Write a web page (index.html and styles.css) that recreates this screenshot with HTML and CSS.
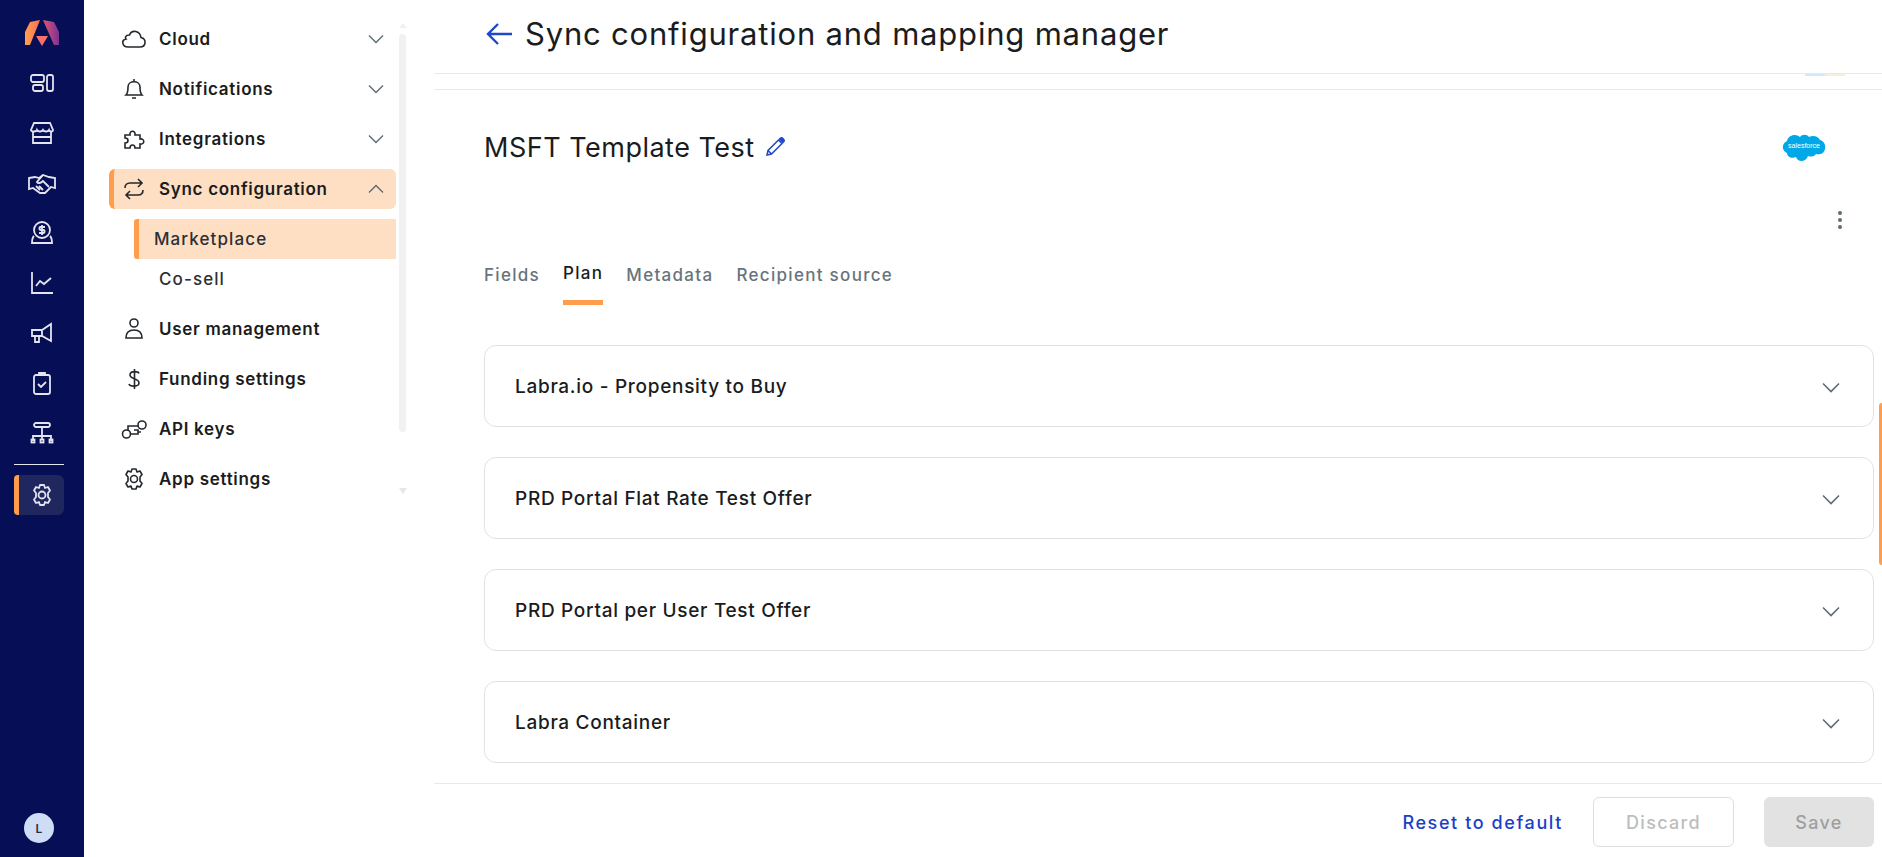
FILE: index.html
```html
<!DOCTYPE html>
<html lang="en">

<head>
    <meta charset="UTF-8">
    <meta name="viewport" content="width=device-width, initial-scale=1.0">
    <title>Sync configuration and mapping manager</title>
    <link rel="stylesheet" href="styles.css">
</head>

<body>
    <div class="page">
        <nav class="rail">
            <div class="rail-item">
                <svg class="logo" viewBox="0 0 34 28">
                    <defs>
                        <linearGradient id="lg1" x1="0" y1="0" x2="1" y2="0">
                            <stop offset="0" stop-color="#ffa04d" />
                            <stop offset="1" stop-color="#f8705a" />
                        </linearGradient>
                        <linearGradient id="lg2" x1="0" y1="0" x2="1" y2="0">
                            <stop offset="0" stop-color="#e2566e" />
                            <stop offset="1" stop-color="#7a3296" />
                        </linearGradient>
                    </defs>
                    <path d="M0 13 5 3 15 1 5 26H0Z" fill="url(#lg1)" />
                    <path d="M18 1 29 3 34 13V26H29Z" fill="url(#lg2)" />
                    <path d="M11 17H23L17 27Z" fill="#f8706a" />
                </svg>
            </div>
            <div class="rail-item">
                <svg class="rail-icon" viewBox="0 0 24 24">
                    <rect x="1" y="4" width="13" height="7" rx="2" />
                    <rect x="3" y="14" width="10" height="6" rx="2" />
                    <rect x="17" y="4" width="6" height="16" rx="2" />
                </svg>
            </div>
            <div class="rail-item">
                <svg class="rail-icon" viewBox="0 0 24 24">
                    <path d="M4 2H20L23 9C23 11 19.500 11 19 9 18 11 14 11 13 9 12 11 8 11 7 9 6.500 11 1 11 1 9Z" />
                    <path d="M3 11V22H21V11M3 16H21" />
                </svg>
            </div>
            <div class="rail-item">
                <svg class="rail-icon rail-icon-wide" viewBox="0 0 28 24">
                    <path d="M1 7 7 6 11 7 15 4 21 6 27 7V17L23 16 17 22 12 22 5 17 1 18Z" />
                    <path d="M15 4 9 11C10 13 13 12 15 10L21 16M11 15 15 19M8 15 12 19" />
                </svg>
            </div>
            <div class="rail-item">
                <svg class="rail-icon" viewBox="0 0 24 24">
                    <circle cx="12" cy="9" r="8" />
                    <path d="M15 6H10.500C9 6 9 9 10.500 9H13.500C15 9 15 12 13.500 12H9M12 4V14" />
                    <path d="M4 15C2 17 2 20 2 22H22C22 20 22 17 20 15" />
                </svg>
            </div>
            <div class="rail-item">
                <svg class="rail-icon" viewBox="0 0 24 24">
                    <path d="M2 1V22H23M6 15 10 10 14 13 21 7" />
                </svg>
            </div>
            <div class="rail-item">
                <svg class="rail-icon" viewBox="0 0 24 24">
                    <path d="M2 9H12L21 3V20L12 15H2ZM5 15V21H9V15M12 9V15" />
                </svg>
            </div>
            <div class="rail-item">
                <svg class="rail-icon" viewBox="0 0 24 24">
                    <rect x="4" y="4" width="16" height="19" rx="2" />
                    <path d="M9 4V2H15V4M8 13 11 16 16 11" />
                </svg>
            </div>
            <div class="rail-item">
                <svg class="rail-icon" viewBox="0 0 24 24">
                    <rect x="4" y="2" width="16" height="4" rx="2" />
                    <path d="M12 6V19M3 20V15H21V20" />
                    <rect x="1.500" y="18.500" width="3" height="3" />
                    <rect x="10.500" y="18.500" width="3" height="3" />
                    <rect x="19.500" y="18.500" width="3" height="3" />
                </svg>
            </div>
            <div class="rail-divider"></div>
            <div class="rail-active">
                <svg class="rail-icon" viewBox="0 0 24 24">
                    <circle cx="12" cy="12" r="3.500" />
                    <path d="M10 2H14L15 5 18 4 20 7.500 18 10V14L20 16.500 18 20 15 19 14 22H10L9 19 6 20 4 16.500 6 14V10L4 7.500 6 4 9 5Z" stroke-linejoin="round" />
                </svg>
            </div>
            <div class="avatar">L</div>
        </nav>

        <aside class="sidebar">
            <div class="menu-row">
                <svg class="menu-icon" viewBox="0 0 24 24">
                    <path d="M6 20H18C24 20 25 12 19 10.500 18 4 10 2 7.500 8 3 8 3 11 4 12 -1 13 0 20 6 20Z" />
                </svg>
                <span>Cloud</span>
                <svg class="chevron" viewBox="0 0 16 10"><path d="M1 1.500 8 8.500 15 1.500" /></svg>
            </div>
            <div class="menu-row">
                <svg class="menu-icon" viewBox="0 0 24 24">
                    <path d="M4 18C6 16 6 14 6 10 6 3 18 3 18 10 18 14 18 16 20 18ZM10 21H14M12 2V4" />
                </svg>
                <span>Notifications</span>
                <svg class="chevron" viewBox="0 0 16 10"><path d="M1 1.500 8 8.500 15 1.500" /></svg>
            </div>
            <div class="menu-row">
                <svg class="menu-icon" viewBox="0 0 24 24">
                    <path d="M3 8H8C7 3 14 3 13 8H18V12C23 11 23 18 18 17V21H13C13 17 8 17 8 21H3V16C7 16 7 11 3 11Z" />
                </svg>
                <span>Integrations</span>
                <svg class="chevron" viewBox="0 0 16 10"><path d="M1 1.500 8 8.500 15 1.500" /></svg>
            </div>
            <div class="menu-row menu-row-open">
                <svg class="menu-icon" viewBox="0 0 24 24">
                    <path d="M16 2 20 6 16 10M20 6H8C5 6 3 8 3 11M8 22 4 18 8 14M4 18H16C19 18 21 16 21 13" />
                </svg>
                <span>Sync configuration</span>
                <svg class="chevron" viewBox="0 0 16 10"><path d="M1 8.500 8 1.500 15 8.500" /></svg>
            </div>
            <div class="sub-row sub-row-active">Marketplace</div>
            <div class="sub-row sub-row-last">Co-sell</div>
            <div class="menu-row">
                <svg class="menu-icon" viewBox="0 0 24 24">
                    <circle cx="12" cy="6" r="4" />
                    <path d="M4 21C4 15 8 13 12 13 16 13 20 15 20 21Z" />
                </svg>
                <span>User management</span>
            </div>
            <div class="menu-row">
                <svg class="menu-icon" viewBox="0 0 24 24">
                    <path d="M17 6.500C16 4 8 3.500 8 8 8 12.500 17 11 17 16 17 20 8 20 7 17M12.500 2V22" />
                </svg>
                <span>Funding settings</span>
            </div>
            <div class="menu-row">
                <svg class="menu-icon" viewBox="0 0 24 24">
                    <circle cx="4.500" cy="17" r="4" />
                    <circle cx="20" cy="8" r="4" />
                    <path d="M6 13V9H16M8.500 17H16V13H12M16 15H19" />
                </svg>
                <span>API keys</span>
            </div>
            <div class="menu-row">
                <svg class="menu-icon" viewBox="0 0 24 24">
                    <circle cx="12" cy="12" r="3.500" />
                    <path d="M10 2H14L15 5 18 4 20 7.500 18 10V14L20 16.500 18 20 15 19 14 22H10L9 19 6 20 4 16.500 6 14V10L4 7.500 6 4 9 5Z" stroke-linejoin="round" />
                </svg>
                <span>App settings</span>
            </div>
            <div class="scroll-up"></div>
            <div class="scroll-thumb"></div>
            <div class="scroll-down"></div>
        </aside>

        <main class="main">
            <header class="header">
                <svg class="back" viewBox="0 0 28 24">
                    <path d="M26 12H2M12 2 2 12 12 22" />
                </svg>
                <h1>Sync configuration and mapping manager</h1>
            </header>
            <div class="sub-header">
                <div class="peek peek-blue"></div>
                <div class="peek peek-yellow"></div>
            </div>

            <section class="content">
                <div class="title-row">
                    <h2>MSFT Template Test</h2>
                    <svg class="pencil" viewBox="0 0 20 20">
                        <path d="M13.500 3 17 6.500 6.500 17 2 18 3 13.500ZM3 13.500 6.500 17" />
                        <path d="M14.500 2 16 .8C17 .2 19.800 3 19.200 4L18 5.500Z" fill="currentColor" />
                    </svg>
                    <svg class="sf-logo" viewBox="0 0 44 32">
                        <path d="M18 6C20 3 25 3 27 6 31 4 36 5 38 9 42 10 44 14 43 18 42 23 37 24 34 23 32 26 28 26 26 25 24 31 16 32 14 26 10 28 5 26 5 22 0 20 -1 13 5 10 6 4 14 2 18 6Z" fill="#00a8e8" />
                        <text class="sf-text" x="22" y="17" text-anchor="middle">salesforce</text>
                    </svg>
                </div>
                <div class="more-row">
                    <div class="more">
                        <span class="dot"></span>
                        <span class="dot"></span>
                        <span class="dot"></span>
                    </div>
                </div>
                <div class="tabs">
                    <div class="tab">Fields</div>
                    <div class="tab tab-active">Plan</div>
                    <div class="tab">Metadata</div>
                    <div class="tab">Recipient source</div>
                </div>
                <div class="plans">
                    <div class="plan">
                        <span>Labra.io - Propensity to Buy</span>
                        <svg class="plan-chevron" viewBox="0 0 18 11"><path d="M1 1.500 9 9.500 17 1.500" /></svg>
                    </div>
                    <div class="plan">
                        <span>PRD Portal Flat Rate Test Offer</span>
                        <svg class="plan-chevron" viewBox="0 0 18 11"><path d="M1 1.500 9 9.500 17 1.500" /></svg>
                    </div>
                    <div class="plan">
                        <span>PRD Portal per User Test Offer</span>
                        <svg class="plan-chevron" viewBox="0 0 18 11"><path d="M1 1.500 9 9.500 17 1.500" /></svg>
                    </div>
                    <div class="plan">
                        <span>Labra Container</span>
                        <svg class="plan-chevron" viewBox="0 0 18 11"><path d="M1 1.500 9 9.500 17 1.500" /></svg>
                    </div>
                </div>
            </section>

            <footer class="footer">
                <a class="reset">Reset to default</a>
                <button class="btn btn-discard">Discard</button>
                <button class="btn btn-save">Save</button>
            </footer>
        </main>
        <div class="side-tab"></div>
    </div>
</body>

</html>
```

FILE: styles.css
```css
* {
    box-sizing: border-box;
}

body {
    margin: 0;
    font-family: Inter, "Noto Sans", sans-serif;
    color: #1a1c20;
    background: white;
}

svg {
    overflow: visible;
}

.page {
    display: flex;
    height: 857px;
    overflow: hidden;
    position: relative;
}

/* left rail */
.rail {
    width: 84px;
    flex-shrink: 0;
    background: #060f55;
    display: flex;
    flex-direction: column;
    padding-top: 8px;
}

.rail-item {
    height: 50px;
    display: flex;
    align-items: center;
    justify-content: center;
}

.logo {
    width: 34px;
    height: 28px;
}

.rail-icon {
    width: 24px;
    height: 24px;
    fill: none;
    stroke: #e3e4ee;
    stroke-width: 1.8;
}

.rail-icon-wide {
    width: 28px;
}

.rail-divider {
    height: 1px;
    background: #e3e4ee;
    margin: 6px 20px 10px 14px;
}

.rail-active {
    width: 50px;
    height: 40px;
    margin-left: 14px;
    background: #20275f;
    border-left: 5px solid #ff9d4d;
    border-radius: 4px 6px 6px 4px;
    display: flex;
    align-items: center;
    justify-content: center;
}

.avatar {
    width: 30px;
    height: 30px;
    margin: auto 0 14px 24px;
    border-radius: 50%;
    background: #cfdcf6;
    color: #2a2e45;
    font-size: 12px;
    font-weight: 600;
    display: flex;
    align-items: center;
    justify-content: center;
}

/* menu */
.sidebar {
    width: 350px;
    flex-shrink: 0;
    padding: 19px 0 0 25px;
    position: relative;
}

.menu-row {
    width: 287px;
    height: 40px;
    margin-bottom: 10px;
    padding-left: 13px;
    display: flex;
    align-items: center;
    font-size: 17px;
    font-weight: 600;
    letter-spacing: 0.700px;
}

.menu-icon {
    width: 24px;
    height: 24px;
    margin-right: 13px;
    flex-shrink: 0;
    fill: none;
    stroke: #24282d;
    stroke-width: 1.6;
}

.chevron {
    width: 16px;
    height: 10px;
    margin-left: auto;
    margin-right: 12px;
    fill: none;
    stroke: #5f6b72;
    stroke-width: 1.4;
}

.menu-row-open {
    background: #fedfc3;
    border-left: 5px solid #ff9d4d;
    border-radius: 6px;
    padding-left: 8px;
}

.sub-row {
    width: 262px;
    height: 40px;
    margin-left: 25px;
    padding-left: 25px;
    display: flex;
    align-items: center;
    font-size: 17px;
    font-weight: 500;
    letter-spacing: 1.100px;
    color: #2b3036;
}

.sub-row-active {
    background: #fedfc3;
    border-left: 5px solid #ff9d4d;
    border-radius: 3px 0 0 3px;
    padding-left: 15px;
}

.sub-row-last {
    margin-bottom: 10px;
}

.scroll-thumb {
    position: absolute;
    left: 315px;
    top: 34px;
    width: 7px;
    height: 398px;
    background: #f0f1f1;
    border-radius: 4px;
}

.scroll-up,
.scroll-down {
    position: absolute;
    left: 315px;
    border-left: 4px solid transparent;
    border-right: 4px solid transparent;
}

.scroll-up {
    top: 23px;
    border-bottom: 5px solid #f0f1f1;
}

.scroll-down {
    top: 488px;
    border-top: 6px solid #e6e7e7;
}

/* main column */
.main {
    flex: 1;
    display: flex;
    flex-direction: column;
    min-width: 0;
}

.header {
    height: 74px;
    border-bottom: 1px solid #e9e9e9;
    padding: 0 0 6px 52px;
    display: flex;
    align-items: center;
}

.back {
    width: 28px;
    height: 24px;
    margin-right: 11px;
    fill: none;
    stroke: #1f48cc;
    stroke-width: 2.4;
}

h1 {
    margin: 0;
    font-size: 31px;
    font-weight: 400;
    letter-spacing: 0.8px;
}

.sub-header {
    height: 16px;
    border-bottom: 1px solid #e9e9e9;
    display: flex;
    justify-content: flex-end;
    padding-right: 37px;
}

.peek {
    width: 20px;
    height: 2px;
}

.peek-blue {
    background: #d5e8f7;
}

.peek-yellow {
    background: #f9eeda;
}

.content {
    flex: 1;
    padding: 40px 8px 0 50px;
}

.title-row {
    display: flex;
    align-items: center;
    height: 34px;
}

h2 {
    margin: 0;
    font-size: 27px;
    font-weight: 400;
    letter-spacing: 0.5px;
}

.pencil {
    width: 20px;
    height: 20px;
    margin-left: 10px;
    color: #1f48cc;
    fill: none;
    stroke: #1f48cc;
    stroke-width: 1.5;
}

.sf-logo {
    width: 44px;
    height: 32px;
    margin-left: auto;
    margin-right: 48px;
}

.sf-text {
    font-family: "Liberation Sans", sans-serif;
    font-size: 7px;
    fill: white;
}

.more-row {
    display: flex;
    justify-content: flex-end;
    margin-top: 46px;
    padding-right: 32px;
    height: 20px;
}

.more {
    display: flex;
    flex-direction: column;
    justify-content: center;
    gap: 3px;
}

.dot {
    width: 4px;
    height: 4px;
    border-radius: 50%;
    background: #5f6b72;
}

.tabs {
    display: flex;
    gap: 23px;
    margin-top: 28px;
}

.tab {
    height: 47px;
    padding-top: 7px;
    font-size: 17px;
    font-weight: 500;
    letter-spacing: 1.300px;
    color: #68747c;
}

.tab-active {
    padding-top: 5px;
    color: #1a1c20;
    border-bottom: 5px solid #ff9d4d;
}

.plans {
    display: flex;
    flex-direction: column;
    gap: 30px;
    margin-top: 40px;
}

.plan {
    height: 82px;
    border: 1px solid #e2e2e2;
    border-radius: 12px;
    padding: 0 33px 0 30px;
    display: flex;
    align-items: center;
    justify-content: space-between;
    font-size: 19px;
    font-weight: 500;
    letter-spacing: 0.700px;
}

.plan-chevron {
    width: 18px;
    height: 11px;
    margin-top: 2px;
    fill: none;
    stroke: #5f6b72;
    stroke-width: 1.6;
}

.footer {
    height: 74px;
    border-top: 1px solid #e8e8f0;
    padding: 3px 8px 0 0;
    display: flex;
    align-items: center;
    justify-content: flex-end;
}

.reset {
    font-size: 18px;
    font-weight: 500;
    letter-spacing: 1.600px;
    color: #1c3fc8;
    margin-right: 30px;
}

.btn {
    height: 50px;
    border-radius: 6px;
    font-family: inherit;
    font-size: 18px;
    font-weight: 500;
    letter-spacing: 1.300px;
}

.btn-discard {
    width: 141px;
    background: white;
    border: 1px solid #dedede;
    color: #bdbdbd;
    margin-right: 30px;
}

.btn-save {
    width: 110px;
    background: #e2e2e2;
    border: none;
    color: #9f9f9f;
}

.side-tab {
    position: absolute;
    right: 0;
    top: 403px;
    width: 3px;
    height: 162px;
    background: #ff9d4d;
    border-radius: 3px 0 0 3px;
}
```
